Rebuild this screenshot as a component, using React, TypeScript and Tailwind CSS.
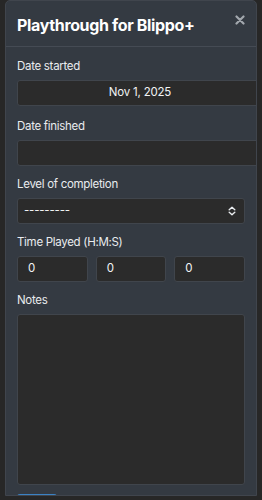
import React from 'react';

const Label: React.FC<{ children: React.ReactNode }> = ({ children }) => (
    <div className="text-[11.5px] leading-[18px] tracking-[-0.3px] text-[#e9ecef] mb-[5px]">{children}</div>
);

const inputBase = 'h-[26px] bg-[#2b2b2b] border border-[#40454c] rounded-[3px] text-[11.5px] tracking-[-0.2px] text-[#f1f3f5] flex items-center';

export default function App() {
    return (
        <div className="w-[262px] h-[500px] bg-[#272727] overflow-hidden px-[5px]" style={{ fontFamily: 'Inter, "Noto Sans", sans-serif' }}>
            <div className="h-[496px] overflow-hidden bg-[#343a42] border border-[#40454d] rounded-t-[5px]">
                <header className="h-[46px] flex items-center justify-between pl-[11px] pr-[11px] border-b border-[#454b54]">
                    <h1 className="text-[16px] font-bold text-white tracking-[-0.35px] mt-[2px]">Playthrough for Blippo+</h1>
                    <svg width="10" height="10" viewBox="0 0 10 10" className="mb-[8px]">
                        <path d="M1.5 1.5 L8.5 8.5 M8.5 1.5 L1.5 8.5" stroke="#a2a7ad" strokeWidth="2.2" strokeLinecap="round" />
                    </svg>
                </header>

                <div className="pl-[11px] pr-[11px] pt-[10px]">
                    <Label>Date started</Label>
                    <div className={`${inputBase} w-[246px] justify-center mb-[11px]`}>Nov 1, 2025</div>

                    <Label>Date finished</Label>
                    <div className={`${inputBase} w-[246px] mb-[9px]`}></div>

                    <Label>Level of completion</Label>
                    <div className={`${inputBase} justify-between pl-[6px] pr-[8px] mb-[9px]`}>
                        <span>---------</span>
                        <svg width="8" height="10" viewBox="0 0 8 10">
                            <path d="M1.2 3.8 L4 1.2 L6.8 3.8 M1.2 6.2 L4 8.8 L6.8 6.2" stroke="#e9ecef" strokeWidth="1.4" fill="none" strokeLinecap="round" strokeLinejoin="round" />
                        </svg>
                    </div>

                    <Label>Time Played (H:M:S)</Label>
                    <div className="grid grid-cols-3 gap-[8px] mb-[9px]">
                        <div className={`${inputBase} pl-[10px]`}>0</div>
                        <div className={`${inputBase} pl-[10px]`}>0</div>
                        <div className={`${inputBase} pl-[10px]`}>0</div>
                    </div>

                    <Label>Notes</Label>
                    <div className="h-[171px] bg-[#2b2b2b] border border-[#40454c] rounded-[3px] mb-[9px]"></div>

                    <div className="w-[40px] h-[24px] bg-[#3b82c4] rounded-[3px]"></div>
                </div>
            </div>
        </div>
    );
}
